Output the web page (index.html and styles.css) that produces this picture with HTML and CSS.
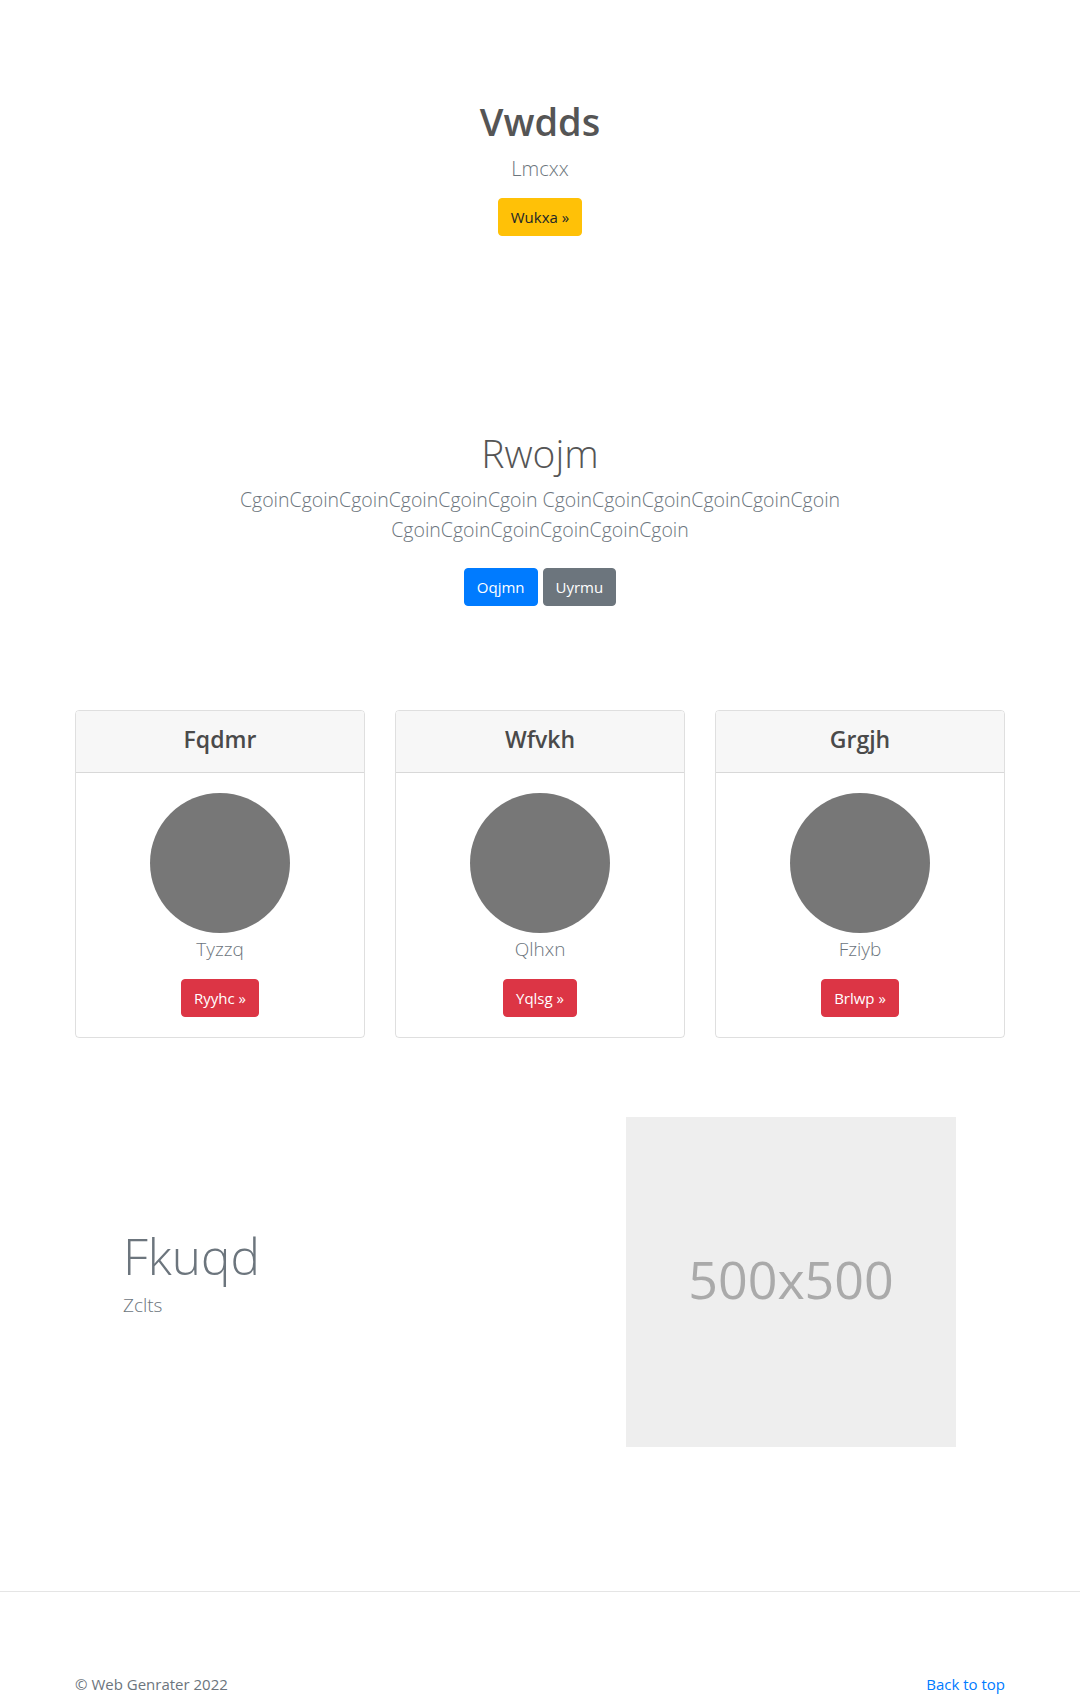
FILE: index.html
```html
<!DOCTYPE html>
<html lang="en">
<head>
<meta charset="utf-8">
<title>Vwdds</title>
<link rel="stylesheet" href="styles.css">
</head>
<body>
<main>
  <section class="hero">
    <h1 class="hero-title">Vwdds</h1>
    <p class="lead hero-lead">Lmcxx</p>
    <a class="btn btn-warning" href="#">Wukxa &raquo;</a>
  </section>

  <section class="intro">
    <h1 class="intro-title">Rwojm</h1>
    <p class="lead muted intro-lead">CgoinCgoinCgoinCgoinCgoinCgoin CgoinCgoinCgoinCgoinCgoinCgoin CgoinCgoinCgoinCgoinCgoinCgoin</p>
    <div class="btn-row">
      <a class="btn btn-primary" href="#">Oqjmn</a>
      <a class="btn btn-secondary" href="#">Uyrmu</a>
    </div>
  </section>

  <section class="cards">
    <div class="card">
      <div class="card-header"><h4>Fqdmr</h4></div>
      <div class="card-body">
        <div class="avatar"></div>
        <p class="lead muted name">Tyzzq</p>
        <a class="btn btn-danger" href="#">Ryyhc &raquo;</a>
      </div>
    </div>
    <div class="card">
      <div class="card-header"><h4>Wfvkh</h4></div>
      <div class="card-body">
        <div class="avatar"></div>
        <p class="lead muted name">Qlhxn</p>
        <a class="btn btn-danger" href="#">Yqlsg &raquo;</a>
      </div>
    </div>
    <div class="card">
      <div class="card-header"><h4>Grgjh</h4></div>
      <div class="card-body">
        <div class="avatar"></div>
        <p class="lead muted name">Fziyb</p>
        <a class="btn btn-danger" href="#">Brlwp &raquo;</a>
      </div>
    </div>
  </section>

  <section class="feature">
    <div class="feature-text">
      <h2 class="feature-title">Fkuqd</h2>
      <p class="lead muted feature-lead">Zclts</p>
    </div>
    <div class="placeholder"><span>500x500</span></div>
  </section>
</main>

<footer class="footer">
  <div class="footer-inner">
    <p class="copy">&copy; Web Genrater 2022</p>
    <a class="back" href="#">Back to top</a>
  </div>
</footer>
</body>
</html>
```

FILE: styles.css
```css
* { box-sizing: border-box; }

html, body {
  margin: 0;
  padding: 0;
  background: #fff;
}

body {
  font-family: "Open Sans", "Noto Sans", "Liberation Sans", sans-serif;
  font-size: 16px;
  line-height: 1.5;
  color: #212529;
}

h1, h2, h4, p { margin: 0; }

.lead {
  font-size: 20px;
  line-height: 30px;
  font-weight: 300;
}

.muted { color: #6c757d; }

.btn {
  display: inline-block;
  font-size: 15px;
  line-height: 24px;
  padding: 6px 12px;
  border: 1px solid transparent;
  border-radius: 4px;
  text-decoration: none;
  font-weight: 400;
}

.btn-warning { background: #ffc107; border-color: #ffc107; color: #212529; }
.btn-primary { background: #007bff; border-color: #007bff; color: #fff; }
.btn-secondary { background: #6c757d; border-color: #6c757d; color: #fff; }
.btn-danger { background: #dc3545; border-color: #dc3545; color: #fff; }

/* hero */
.hero {
  display: flex;
  flex-direction: column;
  align-items: center;
  text-align: center;
  padding-top: 97px;
}

.hero-title {
  font-size: 38px;
  line-height: 48px;
  font-weight: 600;
  color: #555;
  margin-bottom: 9px;
}

.hero-lead {
  color: #6c757d;
  margin-bottom: 14px;
}

/* intro */
.intro {
  display: flex;
  flex-direction: column;
  align-items: center;
  text-align: center;
  margin-top: 193px;
}

.intro-title {
  font-size: 39px;
  line-height: 48px;
  font-weight: 300;
  color: #555;
  margin-bottom: 8px;
}

.intro-lead {
  max-width: 760px;
  font-size: 19.5px;
  margin-bottom: 23px;
}

.btn-row {
  display: flex;
  gap: 5px;
}

/* cards */
.cards {
  width: 930px;
  margin: 104px auto 0;
  display: grid;
  grid-template-columns: repeat(3, 1fr);
  gap: 30px;
}

.card {
  border: 1px solid rgba(0, 0, 0, 0.125);
  border-radius: 4px;
  overflow: hidden;
}

.card-header {
  background: #f7f7f7;
  border-bottom: 1px solid rgba(0, 0, 0, 0.125);
  padding: 14px 20px 10px;
  text-align: center;
}

.card-header h4 {
  font-size: 23px;
  line-height: 28.8px;
  font-weight: 600;
  color: #4a4a4a;
  margin-bottom: 8px;
}

.card-body {
  padding: 20px;
  display: flex;
  flex-direction: column;
  align-items: center;
}

.avatar {
  width: 140px;
  height: 140px;
  border-radius: 50%;
  background: #777;
}

.name {
  font-size: 19px;
  margin-top: 1px;
  margin-bottom: 15px;
}

/* feature */
.feature {
  width: 930px;
  margin: 79px auto 0;
  padding: 0 49px 0 48px;
  display: grid;
  grid-template-columns: 1fr 330px;
  align-items: center;
}

.feature-title {
  font-size: 49.5px;
  line-height: 67px;
  font-weight: 300;
  color: #6c757d;
  margin-top: 3px;
}

.feature-lead {
  font-size: 19px;
  margin-bottom: 24px;
}

.placeholder {
  width: 330px;
  height: 330px;
  background: #eee;
  display: flex;
  align-items: center;
  justify-content: center;
}

.placeholder span {
  font-size: 52px;
  color: #aaa;
  line-height: 1;
  margin-bottom: 6px;
}

/* footer */
.footer {
  margin-top: 144px;
  border-top: 1px solid #e5e5e5;
  padding: 80px 0 48px;
}

.footer-inner {
  width: 930px;
  margin: 0 auto;
  display: flex;
  justify-content: space-between;
  align-items: baseline;
}

.copy {
  color: #6c757d;
  font-size: 15px;
  line-height: 24px;
}

.back {
  color: #007bff;
  text-decoration: none;
  font-size: 15px;
  line-height: 24px;
}
```
